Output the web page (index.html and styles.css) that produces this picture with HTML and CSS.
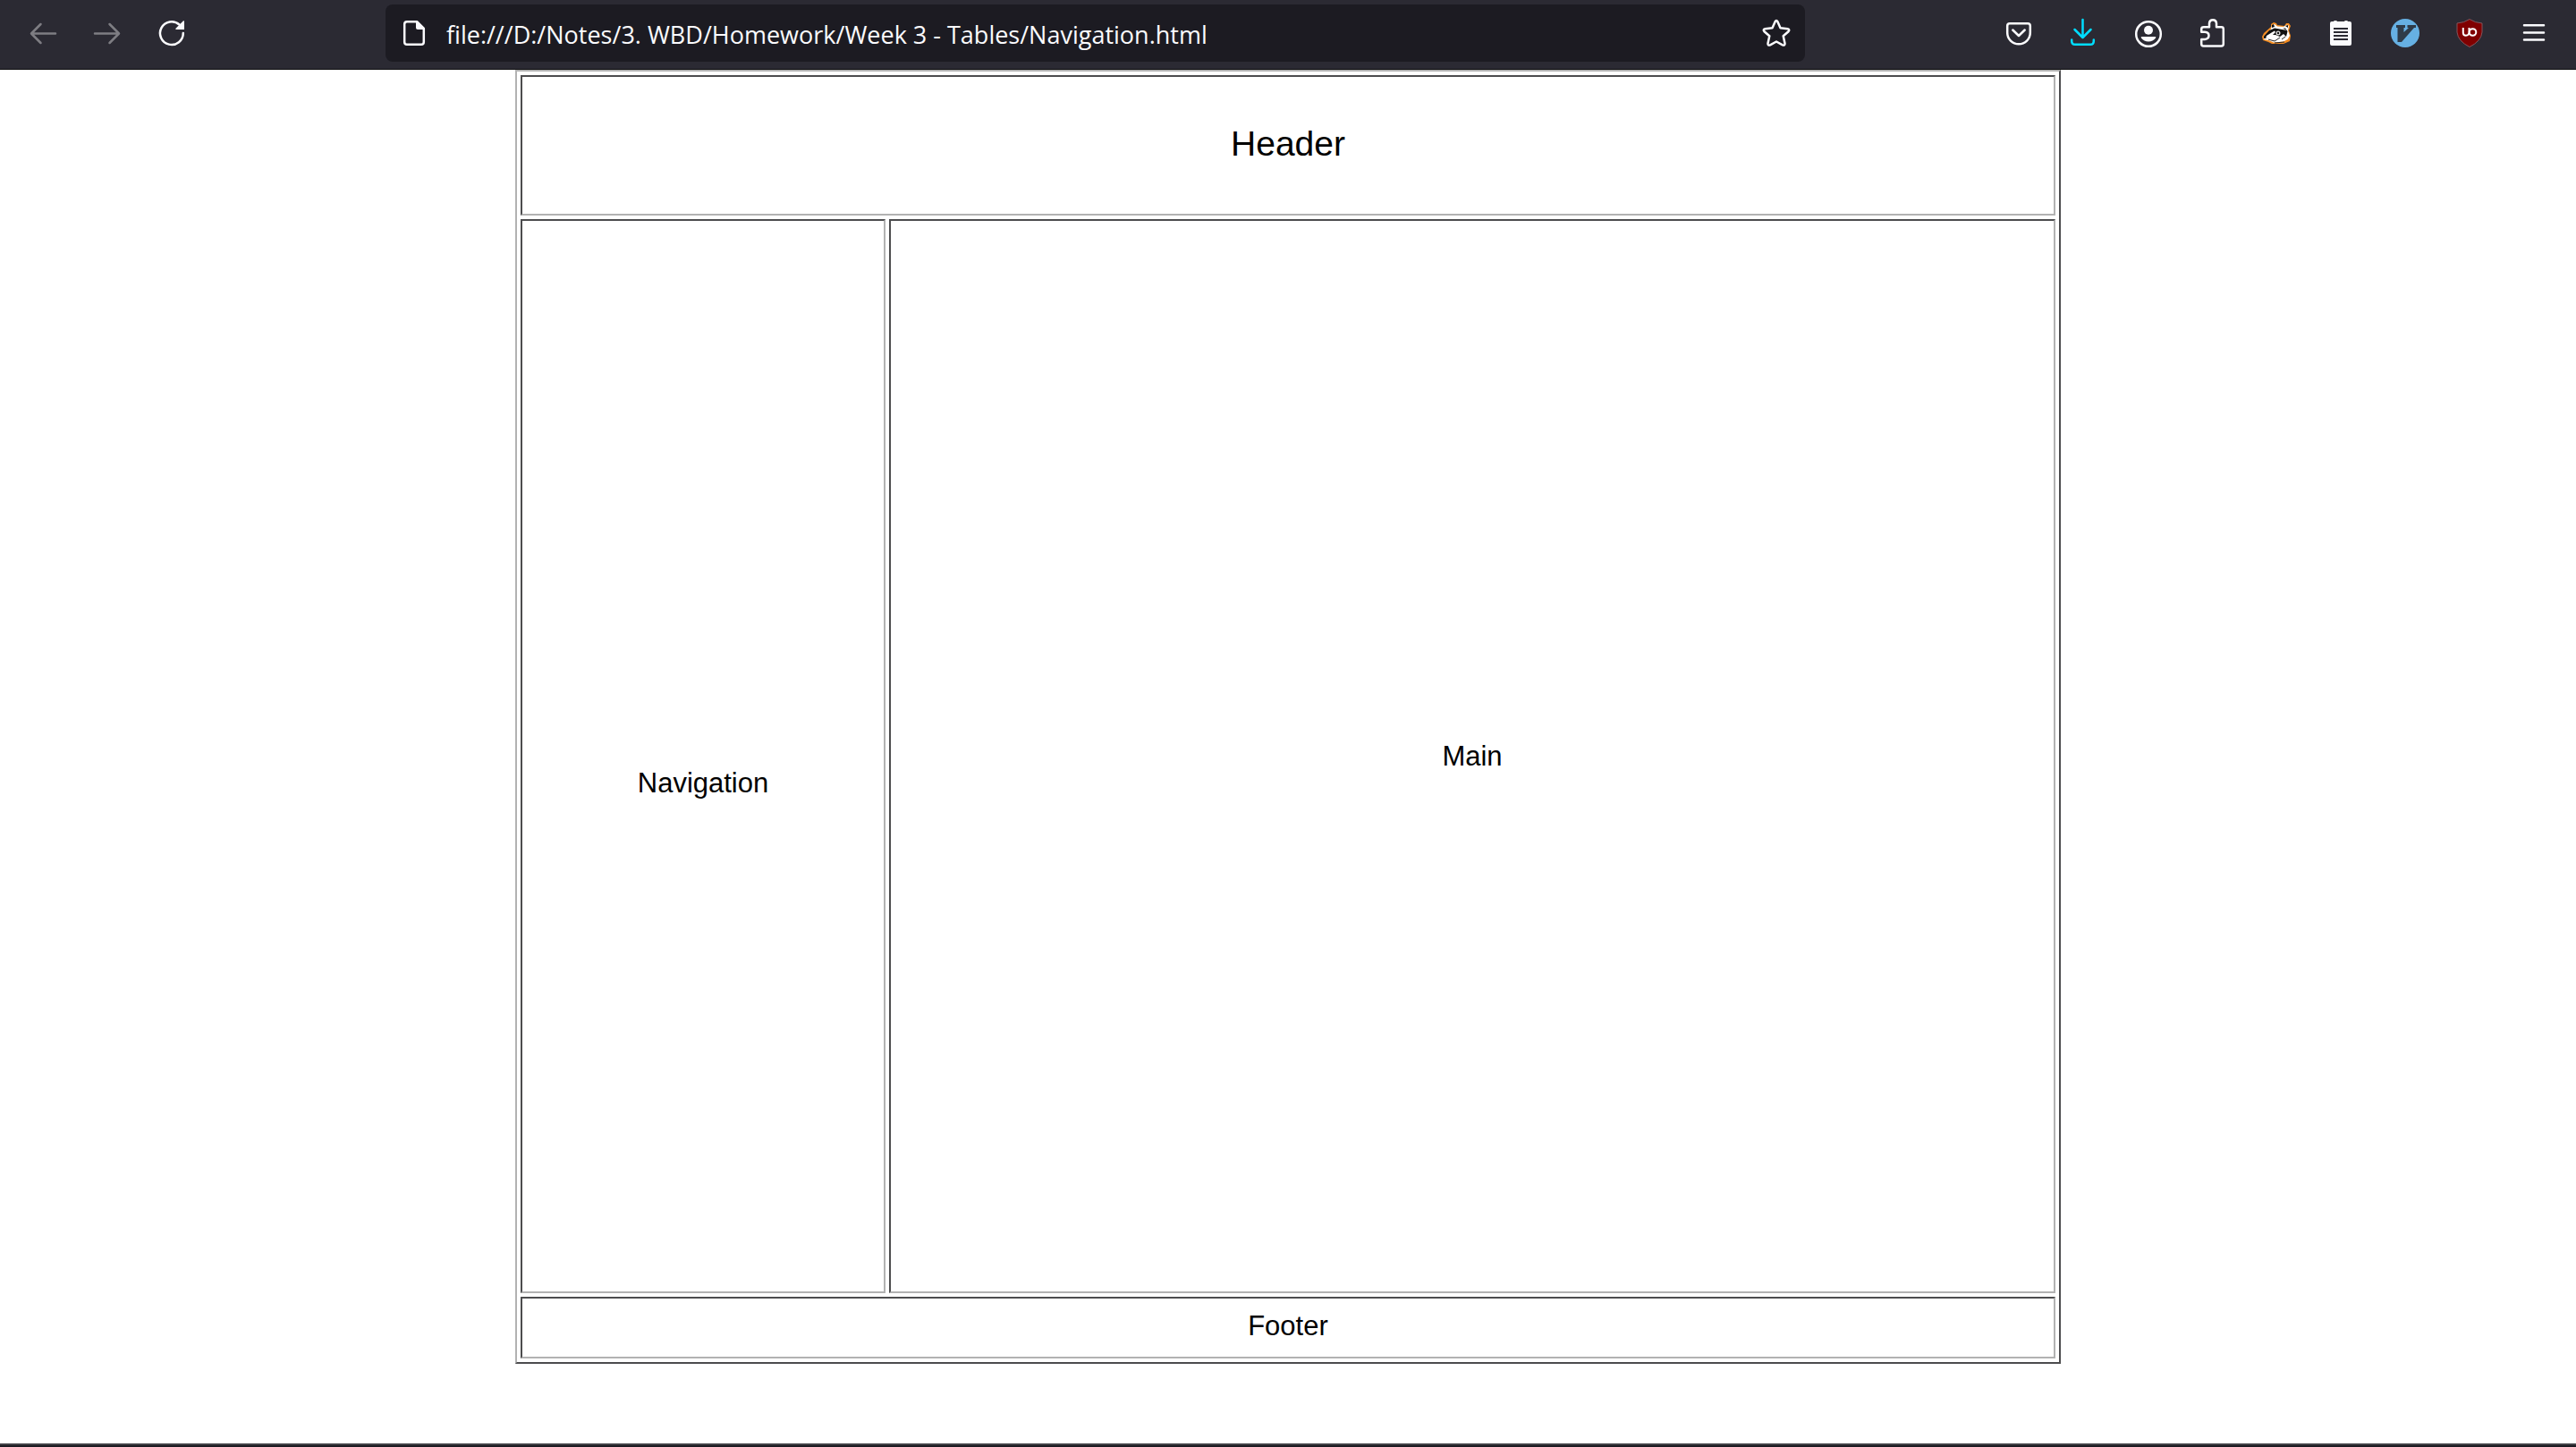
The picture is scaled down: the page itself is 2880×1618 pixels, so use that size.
FILE: index.html
```html
<!DOCTYPE html>
<html lang="en">
<head>
<meta charset="utf-8">
<title>Navigation</title>
<link rel="stylesheet" href="styles.css">
</head>
<body>
<header class="toolbar">
  <button class="tool dim" type="button" aria-label="Back"><svg viewBox="0 0 32 32"><path d="M30 16.500H3.500M13.500 6 3 16.500 13.500 27" class="line"/></svg></button>
  <button class="tool dim" type="button" aria-label="Forward"><svg viewBox="0 0 32 32"><path d="M2 16.500H28.500M18.500 6 29 16.500 18.500 27" class="line"/></svg></button>
  <button class="tool" type="button" aria-label="Reload"><svg viewBox="0 0 32 32"><path d="M28.800 16A12.900 12.900 0 1 1 24.500 6.500" class="line"/><path d="M30 3V12H20.800Q19.800 11.500 20.500 10.700L29 2.300Q30 2 30 3z" fill="currentColor"/></svg></button>
  <form class="urlbar">
    <svg viewBox="0 0 32 32"><path d="M19 3.200H8Q5.200 3.200 5.200 6V26Q5.200 28.800 8 28.800H24Q26.800 28.800 26.800 26V11z" class="line"/><path d="M18 2.500V10Q18 12 20 12H27.500V10L20 2.500z" fill="currentColor"/></svg>
    <input class="address" type="text" aria-label="Address" value="file:///D:/Notes/3. WBD/Homework/Week 3 - Tables/Navigation.html">
    <button class="star" type="button" aria-label="Bookmark this page"><svg viewBox="0 0 32 32"><path d="M14.600 3.200Q16 1 17.400 3.200L20.500 10.300 28.600 11.200Q31.400 12 29.500 14.200L23.700 19.300 25.500 27.500Q25.800 30.300 23 29.400L16 25.500 9 29.400Q6.200 30.300 6.500 27.500L8.300 19.300 2.500 14.200Q.6 12 3.400 11.200L11.500 10.300z" class="line"/></svg></button>
  </form>
  <button class="tool" type="button" aria-label="Save to Pocket"><svg viewBox="0 0 32 32"><path d="M6 5.300H26Q28.800 5.300 28.800 8V15.500A12.800 12.800 0 0 1 3.200 15.500V8Q3.200 5.300 6 5.300zM9.300 12.500 16 19 22.700 12.500" class="line"/></svg></button>
  <button class="tool download" type="button" aria-label="Downloads"><svg viewBox="0 0 32 32"><path d="M15.500 1V20.500M6.500 12 15.500 21 24.500 12M3.200 23.500V25Q3.200 28.800 7 28.800H24Q27.800 28.800 27.800 25V23.500" class="line"/></svg></button>
  <button class="tool" type="button" aria-label="Account"><svg viewBox="0 0 32 32"><circle cx="17" cy="17" r="13.800" class="line"/><circle cx="17" cy="12.700" r="5" fill="currentColor"/><path d="M9.500 20H24.500Q26 20 25 21.500Q22 25.500 17 25.500T9 21.500Q8 20 9.500 20z" fill="currentColor"/></svg></button>
  <button class="tool" type="button" aria-label="Extensions"><svg viewBox="0 0 32 32"><path d="M7 9.300H13V5Q13.300 1.300 17 1.300T21 5V9.300H26.500Q28.800 9.300 28.800 11.500V28Q28.800 30.500 26.500 30.500H6.500Q4.200 30.500 4.200 28V23H8Q12.500 22.500 12.500 18.800T8 14.800H4.200V11.500Q4.200 9.300 7 9.300z" class="line"/></svg></button>
  <button class="tool" type="button" aria-label="Privacy Badger"><svg viewBox="0 0 32 32"><path d="M0 20 2 16 10 9 10 6 13 4 16 5 17 7 25 8 27 5 30 5 32 8 30 13 32 19 31 25 24 28 11 28 7 26 1 24z" fill="#f38b20"/><path d="M2 19.500 10 11.500 11 7 14 6 17 8.500 24 9 28 6.500 30 8 29 13 31 19 28.500 23 24 25.500 13 26.500 7 24 2 23z" fill="#fff"/><path d="M2 19.500 8 13 14 10.500 20 11 26 10.500 28.500 14 27 20 24 17 20 20 15 18 9 18 5 22 2 22zM11 7 13 6 14 9 11 10zM26 8 29 7 29 10z" fill="#111"/><path d="M5 19 14 13.500 15 15 10 20 4 22zM13 9 22 10 28 13 17 11z" fill="#fff"/><circle cx="18" cy="16" r="2.500" fill="#ddd"/><circle cx="18" cy="16" r="1.200" fill="#111"/><path d="M7 23 14 25 20 21M22 23 26 20M14 27 25 26" fill="none" stroke="#222" stroke-width="1"/></svg></button>
  <button class="tool" type="button" aria-label="Notes"><svg viewBox="0 0 32 32"><path d="M6 3H8Q8 2 10 2T12 3H20Q20 2 22 2T24 3H26Q28 3 28 5V28Q28 30 26 30H6Q4 30 4 28V5Q4 3 6 3z" fill="#fbfbfe"/><path d="M8 11H24M8 15H24M8 19H24M8 23H24" stroke="#2b2a33" stroke-width="2"/></svg></button>
  <button class="tool" type="button" aria-label="Vimium"><svg viewBox="0 0 32 32"><circle cx="16" cy="16" r="16" fill="#66b0e3"/><path d="M6 7H16V10H14.500V15L20 10H18.500V7H28V10H26L12 26H7.500V10H6z" fill="#2f3b48"/></svg></button>
  <button class="tool" type="button" aria-label="uBlock Origin"><svg viewBox="0 0 32 32"><path d="M16 .5Q22 4.500 30 5V15Q29 25 16 31.500Q3 25 2 15V5Q10 4.500 16 .5z" fill="#800000" stroke="#83545b"/><path d="M8.800 10V15.500Q8.800 18.700 12 18.700T15.500 15.500V10" fill="none" stroke="#fff" stroke-width="2"/><circle cx="19.500" cy="15" r="3.800" fill="none" stroke="#fff" stroke-width="2"/></svg></button>
  <button class="tool" type="button" aria-label="Menu"><svg viewBox="0 0 32 32"><path d="M5 7.300H27M5 15.500H27M5 23.500H27" class="line"/></svg></button>
</header>
<main class="page">
  <table class="layout">
    <tbody>
      <tr class="top"><td colspan="2">Header</td></tr>
      <tr><td class="nav">Navigation</td><td>Main</td></tr>
      <tr class="bottom"><td colspan="2">Footer</td></tr>
    </tbody>
  </table>
</main>
</body>
</html>
```
FILE: styles.css
```css
* {
  box-sizing: border-box;
}

body {
  display: flex;
  flex-direction: column;
  min-height: 100vh;
  margin: 0;
  background: #fff;
  color: #000;
  font-family: "Liberation Sans", Arial, sans-serif;
}

.toolbar {
  display: flex;
  align-items: center;
  padding: 5px 11px 8px 12px;
  border-bottom: 1px solid #0c0c0d;
  background: #2b2a33;
}

button {
  padding: 0;
  border: 0;
  background: none;
  color: #fbfbfe;
}

svg {
  display: block;
  flex: none;
  width: 32px;
  height: 32px;
  overflow: visible;
}

.line {
  fill: none;
  stroke: currentColor;
  stroke-width: 2.5;
  stroke-linecap: round;
  stroke-linejoin: round;
}

.tool {
  display: flex;
  flex: none;
  align-items: center;
  justify-content: center;
  width: 72px;
  height: 64px;
}

.dim {
  color: #7e7d83;
}

.download {
  color: #00ddff;
}

.urlbar {
  display: flex;
  flex: 1;
  align-items: center;
  gap: 20px;
  min-width: 0;
  height: 64px;
  margin: 0 203px;
  padding: 0 16px;
  border-radius: 8px;
  background: #1c1b22;
  color: #fbfbfe;
}

.address {
  flex: 1;
  min-width: 0;
  padding: 4px 0 0;
  border: 0;
  outline: 0;
  background: none;
  color: inherit;
  font: 27px/40px "Open Sans", "Noto Sans", sans-serif;
}

.page {
  flex: 1;
  border-bottom: 2px solid #1c1b22;
  box-shadow: inset 0 -2px #414045;
}

.layout {
  width: 60%;
  height: calc(100vh - 171px);
  margin: 0 auto;
  border: 2px solid;
  border-color: #b2b2b2 #4c4c4e #4c4c4e #b2b2b2;
  border-spacing: 4px;
  font-size: 31px;
  text-align: center;
}

.layout td {
  padding: 0;
  border: 2px solid;
  border-color: #4c4c4e #b2b2b2 #b2b2b2 #4c4c4e;
}

.layout .top td {
  height: 157px;
  padding-bottom: 4px;
  font-size: 39px;
}

.layout .nav {
  width: 408px;
  padding-top: 60px;
}

.layout .bottom td {
  height: 69px;
  padding-bottom: 4px;
}
```
